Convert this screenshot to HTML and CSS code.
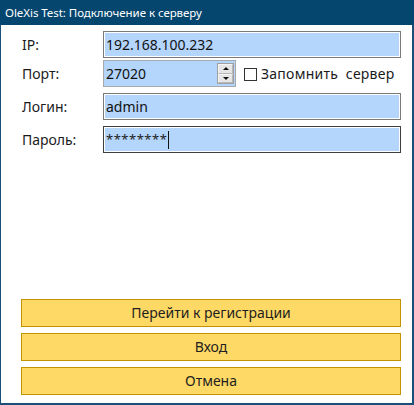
FILE: index.html
```html
<!DOCTYPE html>
<html lang="ru">
<head>
<meta charset="utf-8">
<title>OleXis Test</title>
<link rel="stylesheet" href="styles.css">
</head>
<body>
<div class="window">
  <div class="titlebar">OleXis Test: Подключение к серверу</div>
  <div class="content">
    <div class="form">
      <div class="row row-ip">
        <span class="label">IP:</span>
        <div class="field">192.168.100.232</div>
      </div>
      <div class="row row-port">
        <span class="label">Порт:</span>
        <div class="port-line">
          <div class="field field-port">
            <span class="port-value">27020</span>
            <div class="spinner">
              <div class="spin-btn"><span class="tri-up"></span></div>
              <div class="spin-btn"><span class="tri-down"></span></div>
            </div>
          </div>
          <label class="check">
            <span class="box"></span>
            <span class="check-text">Запомнить&nbsp; сервер</span>
          </label>
        </div>
      </div>
      <div class="row row-login">
        <span class="label">Логин:</span>
        <div class="field">admin</div>
      </div>
      <div class="row row-pass">
        <span class="label">Пароль:</span>
        <div class="field field-focus"><span class="stars">********</span><span class="caret"></span></div>
      </div>
    </div>
    <div class="buttons">
      <div class="btn">Перейти к регистрации</div>
      <div class="btn">Вход</div>
      <div class="btn">Отмена</div>
    </div>
  </div>
</div>
</body>
</html>
```
FILE: styles.css
```css
html, body {
  margin: 0;
  padding: 0;
  background: #ffffff;
}
body {
  font-family: "Noto Sans", "Open Sans", sans-serif;
  color: #1b1b1b;
}
.window {
  box-sizing: border-box;
  width: 414px;
  height: 405px;
  display: flex;
  flex-direction: column;
  border-left: 1px solid #1b4f77;
  border-right: 2px solid #1b4f77;
  border-bottom: 2px solid #1b4f77;
}
.titlebar {
  height: 25px;
  margin-left: -1px;
  margin-right: -2px;
  background: #05466e;
  color: #ffffff;
  font-size: 11.5px;
  letter-spacing: -0.05px;
  line-height: 25px;
  padding-left: 5px;
  box-sizing: border-box;
}
.content {
  flex: 1;
  display: flex;
  flex-direction: column;
  padding: 6px 11px 8px 20px;
}
.form {
  display: flex;
  flex-direction: column;
}
.row {
  display: grid;
  grid-template-columns: 82px 1fr;
  align-items: center;
}
.row-port { margin-top: 2px; }
.row-login { margin-top: 6px; }
.row-pass { margin-top: 6px; }
.label {
  font-size: 14px;
  padding-left: 1px;
}
.field {
  box-sizing: border-box;
  height: 27px;
  border: 1px solid #7a7a7a;
  box-shadow: inset 0 0 0 1px #ffffff;
  background: #b4d5fc;
  font-size: 14px;
  line-height: 25px;
  padding-left: 2px;
  color: #111;
  display: flex;
  align-items: center;
}
.port-line {
  display: flex;
  align-items: center;
}
.field-port {
  width: 133px;
  border-color: #a9a9a9;
  box-shadow: none;
  justify-content: space-between;
  padding-right: 1px;
}
.spinner {
  width: 15px;
  height: 19px;
  display: flex;
  flex-direction: column;
  border: 1px solid #a0a0a0;
  background: #e6e6e6;
}
.spin-btn {
  flex: 1;
  display: flex;
  align-items: center;
  justify-content: center;
  border: 1px solid #f4f4f4;
  border-right-color: #b8b8b8;
  border-bottom-color: #b8b8b8;
}
.tri-up, .tri-down {
  width: 0;
  height: 0;
  border-left: 3px solid transparent;
  border-right: 3px solid transparent;
}
.tri-up { border-bottom: 3px solid #111; }
.tri-down { border-top: 3px solid #111; }
.check {
  display: flex;
  align-items: center;
  margin-left: 8px;
  font-size: 14px;
}
.check-text {
  letter-spacing: 0.25px;
}
.box {
  box-sizing: border-box;
  width: 13px;
  height: 13px;
  border: 1px solid #333;
  background: #fff;
  margin-right: 4px;
  margin-top: 1px;
}
.field-focus {
  border-color: #3f3f3f;
}
.stars {
  font-size: 13px;
  letter-spacing: 0.5px;
  color: #222;
}
.caret {
  display: inline-block;
  width: 1px;
  height: 18px;
  background: #111;
  margin-left: 1px;
}
.buttons {
  margin-top: auto;
  display: flex;
  flex-direction: column;
  gap: 6px;
}
.btn {
  box-sizing: border-box;
  width: 380px;
  height: 28px;
  border: 1px solid #c39400;
  background: #ffd966;
  font-size: 14px;
  line-height: 26px;
  text-align: center;
  color: #1e1e1e;
}
```
